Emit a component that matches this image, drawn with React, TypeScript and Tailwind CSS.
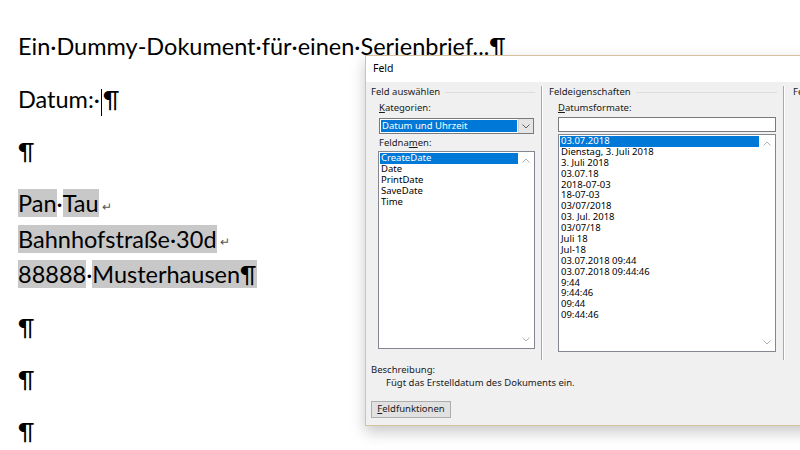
import React from 'react';

const feldnamen = ['CreateDate', 'Date', 'PrintDate', 'SaveDate', 'Time'];

const formate = [
  '03.07.2018',
  'Dienstag, 3. Juli 2018',
  '3. Juli 2018',
  '03.07.18',
  '2018-07-03',
  '18-07-03',
  '03/07/2018',
  '03. Jul. 2018',
  '03/07/18',
  'Juli 18',
  'Jul-18',
  '03.07.2018 09:44',
  '03.07.2018 09:44:46',
  '9:44',
  '9:44:46',
  '09:44',
  '09:44:46',
];

const Hl = ({ children }: { children: React.ReactNode }) => (
  <span className="bg-[#c8c8c8]">{children}</span>
);

const Arrow = () => <span className="text-[12px] text-[#555] align-middle ml-[3px]">↵</span>;

const Chevron = ({ up, color = '#b0b0b0' }: { up?: boolean; color?: string }) => (
  <svg width="8" height="5" viewBox="0 0 8 5">
    <path d={up ? 'M0.5 4.5L4 1l3.5 3.5' : 'M0.5 0.5L4 4l3.5-3.5'} fill="none" stroke={color} strokeWidth="1" />
  </svg>
);

const GroupHeader = ({ title }: { title: string }) => (
  <div className="flex items-center h-[12px]">
    <span className="whitespace-nowrap">{title}</span>
    <div className="flex-1 ml-[5px] mr-[6px] border-t border-[#dcdcdc]" />
  </div>
);

const Separator = () => (
  <div className="shrink-0 w-[2px] h-full border-l border-[#a9a9a9] border-r border-r-white" />
);

const ListBox = ({ items, w, h }: { items: string[]; w: string; h: string }) => (
  <div className={`${w} ${h} bg-white border border-[#828790] flex`}>
    <div className="flex-1 pl-[1px] pt-[1px]">
      {items.map((it, i) => (
        <div
          key={it}
          className={`h-[10.9px] leading-[10.9px] pl-[1px] ${i === 0 ? 'bg-[#0078d7] text-white' : 'text-black'}`}
        >
          {it}
        </div>
      ))}
    </div>
    <div className="w-[16px] flex flex-col items-center justify-between py-[6px]">
      <Chevron up />
      <Chevron />
    </div>
  </div>
);

const App = () => {
  return (
    <div className="relative w-[800px] h-[450px] bg-white overflow-hidden">
      <div className="pl-[18px] pt-[30px] text-[23.5px] leading-[33px] text-black font-['Lato',sans-serif]">
        <p>Ein·Dummy-Dokument·für·einen·Serienbrief...¶</p>
        <p className="mt-[20px]">
          Datum:·<span className="inline-block w-px h-[27px] bg-black align-middle mx-[1px]" />¶
        </p>
        <p className="mt-[19px]">¶</p>
        <div className="mt-[19px]">
          <p>
            <Hl>Pan</Hl>·<Hl>Tau</Hl>
            <Arrow />
          </p>
          <p>
            <Hl>Bahnhofstraße·30d</Hl>
            <Arrow />
          </p>
          <p>
            <Hl>88888</Hl>·<Hl>Musterhausen¶</Hl>
          </p>
        </div>
        <p className="mt-[20px]">¶</p>
        <p className="mt-[19px]">¶</p>
        <p className="mt-[19px]">¶</p>
      </div>

      <div className="absolute left-[365px] top-[55px] w-[450px] h-[371px] border border-[#d6c29e] bg-[#f0f0f0] shadow-[0_6px_14px_rgba(0,0,0,0.22)] flex flex-col text-[9.5px] text-[#1a1a1a] font-['Noto_Sans',sans-serif]">
        <div className="h-[26px] bg-white flex items-center pl-[7px] text-[10.5px] text-black">Feld</div>
        <div className="flex-1 flex flex-col pl-[5px] pt-[4px]">
          <div className="flex h-[274px]">
            <div className="shrink-0 w-[170px] flex flex-col">
              <GroupHeader title="Feld auswählen" />
              <div className="pl-[8px] flex flex-col">
                <div className="mt-[5px] h-[10px] leading-[10px]">
                  <u>K</u>ategorien:
                </div>
                <div className="mt-[5px] w-[155px] h-[16px] bg-white border border-[#7a7a7a] flex items-center">
                  <div className="flex-1 h-[12px] mx-[1px] bg-[#0078d7] text-white leading-[12px] pl-[1px]">
                    Datum und Uhrzeit
                  </div>
                  <div className="w-[15px] h-full bg-[#e5e5e5] border-l border-[#cfcfcf] flex items-center justify-center">
                    <Chevron color="#606060" />
                  </div>
                </div>
                <div className="mt-[4px] h-[10px] leading-[10px]">
                  Feldna<u>m</u>en:
                </div>
                <div className="mt-[3px] -ml-[1px]">
                  <ListBox items={feldnamen} w="w-[157px]" h="h-[198px]" />
                </div>
              </div>
            </div>
            <Separator />
            <div className="shrink-0 w-[240px] flex flex-col pl-[6px]">
              <GroupHeader title="Feldeigenschaften" />
              <div className="pl-[9px] flex flex-col">
                <div className="mt-[5px] h-[10px] leading-[10px]">
                  <u>D</u>atumsformate:
                </div>
                <div className="mt-[4px] w-[218px] h-[15px] bg-white border border-[#7a7a7a]" />
                <div className="mt-[2px]">
                  <ListBox items={formate} w="w-[218px]" h="h-[218px]" />
                </div>
              </div>
            </div>
            <Separator />
            <div className="flex-1 min-w-0 overflow-hidden pl-[8px]">
              <GroupHeader title="Feldoptionen" />
            </div>
          </div>
          <div className="mt-[4px] h-[11px] leading-[11px]">Beschreibung:</div>
          <div className="mt-[2px] pl-[15px] h-[11px] leading-[11px]">Fügt das Erstelldatum des Dokuments ein.</div>
          <div className="mt-[13px] w-[80px] h-[17px] bg-[#e1e1e1] border border-[#adadad] flex items-center justify-center">
            <span>
              <u>F</u>eldfunktionen
            </span>
          </div>
        </div>
      </div>
    </div>
  );
};

export default App;
